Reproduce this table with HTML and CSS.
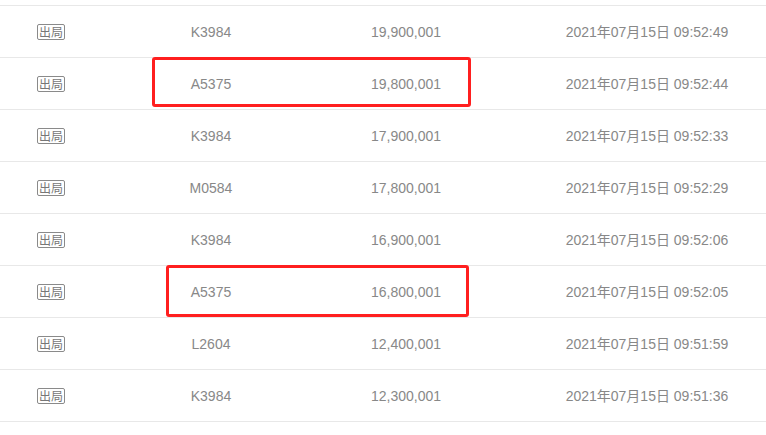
FILE: index.html
```html
<!DOCTYPE html>
<html lang="zh">
<head>
<meta charset="utf-8">
<link rel="stylesheet" href="styles.css">
</head>
<body>
<div class="wrap">
  <div class="table">
    <div class="row"><div class="c1"><span class="badge">出局</span></div><div class="c2">K3984</div><div class="c3">19,900,001</div><div class="c4">2021年07月15日 09:52:49</div></div>
    <div class="row"><div class="c1"><span class="badge">出局</span></div><div class="c2">A5375</div><div class="c3">19,800,001</div><div class="c4">2021年07月15日 09:52:44</div></div>
    <div class="row"><div class="c1"><span class="badge">出局</span></div><div class="c2">K3984</div><div class="c3">17,900,001</div><div class="c4">2021年07月15日 09:52:33</div></div>
    <div class="row"><div class="c1"><span class="badge">出局</span></div><div class="c2">M0584</div><div class="c3">17,800,001</div><div class="c4">2021年07月15日 09:52:29</div></div>
    <div class="row"><div class="c1"><span class="badge">出局</span></div><div class="c2">K3984</div><div class="c3">16,900,001</div><div class="c4">2021年07月15日 09:52:06</div></div>
    <div class="row"><div class="c1"><span class="badge">出局</span></div><div class="c2">A5375</div><div class="c3">16,800,001</div><div class="c4">2021年07月15日 09:52:05</div></div>
    <div class="row"><div class="c1"><span class="badge">出局</span></div><div class="c2">L2604</div><div class="c3">12,400,001</div><div class="c4">2021年07月15日 09:51:59</div></div>
    <div class="row"><div class="c1"><span class="badge">出局</span></div><div class="c2">K3984</div><div class="c3">12,300,001</div><div class="c4">2021年07月15日 09:51:36</div></div>
  </div>
  <div class="mark mark1"></div>
  <div class="mark mark2"></div>
</div>
</body>
</html>
```
FILE: styles.css
```css
html, body {
  margin: 0;
  padding: 0;
  background: #fff;
  overflow: hidden;
}
.wrap {
  position: relative;
  width: 766px;
  height: 435px;
  overflow: hidden;
  padding-top: 5px;
  box-sizing: border-box;
}
.table {
  width: 800px;
  border-top: 1px solid #e8e8e8;
  font-family: "Liberation Sans", Arial, "Noto Sans CJK SC", sans-serif;
  font-size: 14px;
  color: #888;
}
.row {
  display: grid;
  grid-template-columns: 102px 218px 172px 308px;
  height: 51px;
  align-items: center;
  border-bottom: 1px solid #e8e8e8;
}
.row > div {
  text-align: center;
  line-height: 16px;
}
.badge {
  display: inline-block;
  box-sizing: border-box;
  width: 28px;
  height: 16px;
  border: 1px solid #8a8a8a;
  border-radius: 2px;
  font-family: "Noto Sans CJK SC", sans-serif;
  font-size: 12px;
  line-height: 13px;
  color: #777;
  letter-spacing: 0;
  vertical-align: middle;
  margin-top: -1px;
}
.c4 {
  font-family: "Liberation Sans", Arial, "Noto Sans CJK SC", sans-serif;
  padding-left: 2px;
}
.mark {
  position: absolute;
  border: 3px solid #ff1f1f;
  border-radius: 3px;
  box-sizing: border-box;
}
.mark1 {
  left: 152px;
  top: 57px;
  width: 319px;
  height: 50px;
}
.mark2 {
  left: 166px;
  top: 265px;
  width: 303px;
  height: 52px;
}
```
